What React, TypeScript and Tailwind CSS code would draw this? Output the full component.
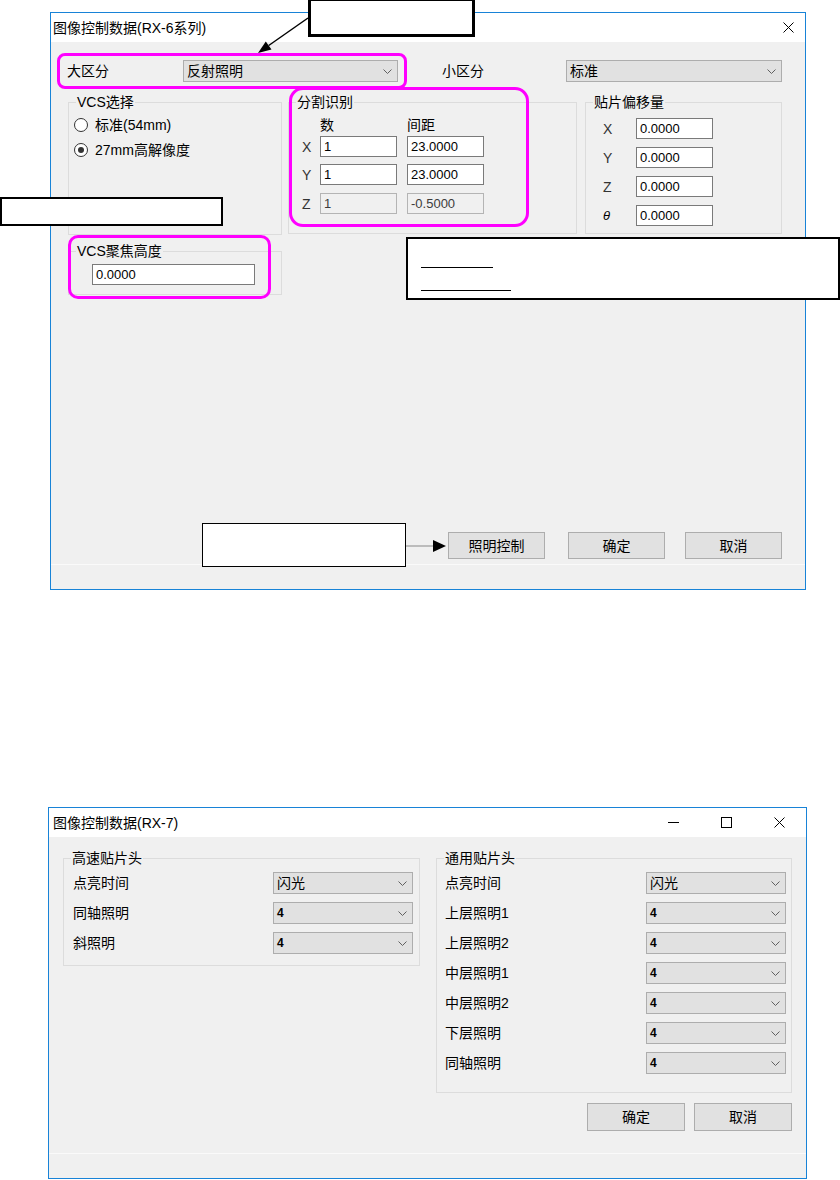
import React from "react";

function Chevron() {
  return (
    <svg width="9" height="5" viewBox="0 0 9 5" className="shrink-0">
      <polyline points="0.5,0.5 4.5,4.5 8.5,0.5" fill="none" stroke="#606060" strokeWidth="1" />
    </svg>
  );
}

function Combo({ value, className = "", digit = false }: { value: string; className?: string; digit?: boolean }) {
  return (
    <div
      className={`flex h-[22px] items-center justify-between border border-[#adadad] bg-[#e1e1e1] pl-[3px] pr-[5px] ${className}`}
    >
      <span className={digit ? "text-[12px] font-bold leading-none" : "text-[14px] leading-none"}>{value}</span>
      <Chevron />
    </div>
  );
}

function Field({ value, disabled = false, className = "" }: { value: string; disabled?: boolean; className?: string }) {
  return (
    <div
      className={`flex h-[21px] items-center pl-[3px] text-[13px] leading-none ${
        disabled ? "border border-[#b4b4b4] bg-[#f0f0f0] text-[#3c3c3c]" : "border border-[#7a7a7a] bg-white"
      } ${className}`}
    >
      {value}
    </div>
  );
}

function Group({ title, className = "", children }: { title: string; className?: string; children?: React.ReactNode }) {
  return (
    <div className={`border border-[#dcdcdc] ${className}`}>
      <div className="-mt-[9px] ml-[7px] w-fit bg-[#f0f0f0] px-[1px] text-[14px] leading-[16px]">{title}</div>
      {children}
    </div>
  );
}

function Button({ label, className = "" }: { label: string; className?: string }) {
  return (
    <div
      className={`flex items-center justify-center border border-[#adadad] bg-[#e1e1e1] text-[14px] leading-none ${className}`}
    >
      {label}
    </div>
  );
}

function Radio({ label, checked = false, className = "" }: { label: string; checked?: boolean; className?: string }) {
  return (
    <div className={`flex h-[16px] items-center pl-[5px] ${className}`}>
      <span className="flex h-[14px] w-[14px] items-center justify-center rounded-full border border-[#333333] bg-white">
        {checked && <span className="h-[6px] w-[6px] rounded-full bg-[#333333]" />}
      </span>
      <span className="ml-[7px] text-[14px] leading-none">{label}</span>
    </div>
  );
}

function CloseIcon() {
  return (
    <svg width="11" height="11" viewBox="0 0 11 11">
      <line x1="0.5" y1="0.5" x2="10.5" y2="10.5" stroke="#000" strokeWidth="1" />
      <line x1="10.5" y1="0.5" x2="0.5" y2="10.5" stroke="#000" strokeWidth="1" />
    </svg>
  );
}

const offsetRows = [
  ["X", "0.0000"],
  ["Y", "0.0000"],
  ["Z", "0.0000"],
  ["θ", "0.0000"]
];

const commonRows = [
  ["点亮时间", "闪光"],
  ["上层照明1", "4"],
  ["上层照明2", "4"],
  ["中层照明1", "4"],
  ["中层照明2", "4"],
  ["下层照明", "4"],
  ["同轴照明", "4"]
];

const fastRows = [
  ["点亮时间", "闪光"],
  ["同轴照明", "4"],
  ["斜照明", "4"]
];

export default function App() {
  return (
    <div className="relative h-[1180px] w-[840px] overflow-hidden bg-white font-[family-name:'Liberation_Sans','Noto_Sans_CJK_SC',sans-serif] text-black">
      {/* RX-6 dialog */}
      <div className="ml-[50px] mt-[12px] flex h-[578px] w-[756px] flex-col border border-[#1883d7] bg-[#f0f0f0]">
        <div className="flex h-[29px] items-center justify-between bg-white pl-[2px]">
          <span className="text-[14px] leading-none">图像控制数据(RX-6系列)</span>
          <span className="flex w-[34px] justify-center">
            <CloseIcon />
          </span>
        </div>

        <div className="flex flex-1 flex-col">
          <div className="mt-[18px] flex items-center pl-[16px] text-[14px] leading-none">
            <span className="w-[116px]">大区分</span>
            <Combo value="反射照明" className="w-[215px]" />
            <span className="ml-[44px] w-[124px]">小区分</span>
            <Combo value="标准" className="w-[216px]" />
          </div>

          <div className="mt-[20px] flex items-start pl-[17px]">
            <div className="flex w-[214px] flex-col">
              <Group title="VCS选择" className="h-[133px]">
                <Radio label="标准(54mm)" className="mt-[7px]" />
                <Radio label="27mm高解像度" checked className="mt-[9px]" />
              </Group>
              <Group title="VCS聚焦高度" className="mt-[16px] h-[44px]">
                <Field value="0.0000" className="ml-[23px] mt-[5px] w-[163px]" />
              </Group>
            </div>

            <Group title="分割识别" className="ml-[6px] h-[132px] w-[289px]">
              <div className="mt-[7px] flex pl-[31px] text-[14px] leading-[16px]">
                <span className="w-[87px]">数</span>
                <span>间距</span>
              </div>
              {[
                ["X", "1", "23.0000", false, "mt-[3px]"],
                ["Y", "1", "23.0000", false, "mt-[7px]"],
                ["Z", "1", "-0.5000", true, "mt-[8px]"]
              ].map(([axis, count, pitch, disabled, gap]) => (
                <div key={axis as string} className={`flex items-center pl-[13px] ${gap}`}>
                  <span className="w-[18px] text-[14px] leading-none text-[#333333]">{axis as string}</span>
                  <Field value={count as string} disabled={disabled as boolean} className="w-[77px]" />
                  <Field value={pitch as string} disabled={disabled as boolean} className="ml-[10px] w-[77px]" />
                </div>
              ))}
            </Group>

            <Group title="贴片偏移量" className="ml-[8px] h-[132px] w-[197px]">
              {offsetRows.map(([axis, value]) => (
                <div key={axis} className="mt-[8px] flex items-center pl-[17px]">
                  <span className={axis === "θ" ? "w-[33px] text-[13px] italic leading-none" : "w-[33px] text-[14px] leading-none text-[#333333]"}>
                    {axis}
                  </span>
                  <Field value={value} className="w-[77px]" />
                </div>
              ))}
            </Group>
          </div>

          <div className="flex-1" />

          <div className="mb-[5px] flex justify-end pr-[23px]">
            <Button label="照明控制" className="h-[27px] w-[97px]" />
            <Button label="确定" className="ml-[23px] h-[27px] w-[97px]" />
            <Button label="取消" className="ml-[20px] h-[27px] w-[97px]" />
          </div>
        </div>

        <div className="h-[25px] border-t border-[#fafafa]" />
      </div>

      {/* RX-7 dialog */}
      <div className="ml-[48px] mt-[217px] flex h-[372px] w-[759px] flex-col border border-[#1883d7] bg-[#f0f0f0]">
        <div className="flex h-[29px] items-center justify-between bg-white pl-[4px]">
          <span className="text-[14px] leading-none">图像控制数据(RX-7)</span>
          <div className="flex h-full items-center">
            <span className="flex w-[53px] justify-center">
              <svg width="11" height="11" viewBox="0 0 11 11">
                <line x1="0" y1="5.5" x2="11" y2="5.5" stroke="#000" strokeWidth="1" />
              </svg>
            </span>
            <span className="flex w-[53px] justify-center">
              <svg width="11" height="11" viewBox="0 0 11 11">
                <rect x="0.5" y="0.5" width="10" height="10" fill="none" stroke="#000" strokeWidth="1" />
              </svg>
            </span>
            <span className="flex w-[53px] justify-center">
              <CloseIcon />
            </span>
          </div>
        </div>

        <div className="flex flex-1 flex-col">
          <div className="mt-[21px] flex items-start pl-[14px]">
            <Group title="高速贴片头" className="h-[108px] w-[357px]">
              {fastRows.map(([label, value], i) => (
                <div key={label} className={`flex items-center pl-[9px] ${i === 0 ? "mt-[6px]" : "mt-[8px]"}`}>
                  <span className="w-[200px] text-[14px] leading-none">{label}</span>
                  <Combo value={value} digit={value === "4"} className="w-[140px]" />
                </div>
              ))}
            </Group>

            <Group title="通用贴片头" className="ml-[16px] h-[235px] w-[356px]">
              {commonRows.map(([label, value], i) => (
                <div key={label} className={`flex items-center pl-[8px] ${i === 0 ? "mt-[6px]" : "mt-[8px]"}`}>
                  <span className="w-[201px] text-[14px] leading-none">{label}</span>
                  <Combo value={value} digit={value === "4"} className="w-[140px]" />
                </div>
              ))}
            </Group>
          </div>

          <div className="mt-[10px] flex justify-end pr-[14px]">
            <Button label="确定" className="h-[28px] w-[98px]" />
            <Button label="取消" className="ml-[9px] h-[28px] w-[98px]" />
          </div>
        </div>

        <div className="h-[25px] border-t border-[#fafafa]" />
      </div>

      {/* annotations */}
      <div className="absolute left-[57px] top-[53px] h-[36px] w-[350px] rounded-[8px] border-[3px] border-[#ff00ff]" />
      <div className="absolute left-[289px] top-[87px] h-[140px] w-[240px] rounded-[14px] border-[3px] border-[#ff00ff]" />
      <div className="absolute left-[68px] top-[235px] h-[64px] w-[203px] rounded-[10px] border-[3px] border-[#ff00ff]" />

      <div className="absolute left-[308px] top-[-2px] h-[39px] w-[167px] border-[3px] border-black bg-white" />
      <div className="absolute left-0 top-[197px] h-[29px] w-[223px] border-2 border-black bg-white" />
      <div className="absolute left-[406px] top-[237px] h-[63px] w-[434px] border-2 border-black bg-white">
        <div className="ml-[13px] mt-[28px] h-px w-[72px] bg-black" />
        <div className="ml-[13px] mt-[22px] h-px w-[90px] bg-black" />
      </div>
      <div className="absolute left-[202px] top-[523px] h-[44px] w-[204px] border-[1.5px] border-black bg-white" />

      <svg className="pointer-events-none absolute left-0 top-0" width="840" height="1180">
        <line x1="308" y1="18" x2="268.7" y2="45.5" stroke="#000" strokeWidth="1.5" />
        <polygon points="258,53 271.5,49.6 265.8,41.4" fill="#000" />
        <line x1="406" y1="546" x2="434" y2="546" stroke="#888" strokeWidth="1" />
        <polygon points="433,540 446,546 433,552" fill="#000" />
      </svg>
    </div>
  );
}
